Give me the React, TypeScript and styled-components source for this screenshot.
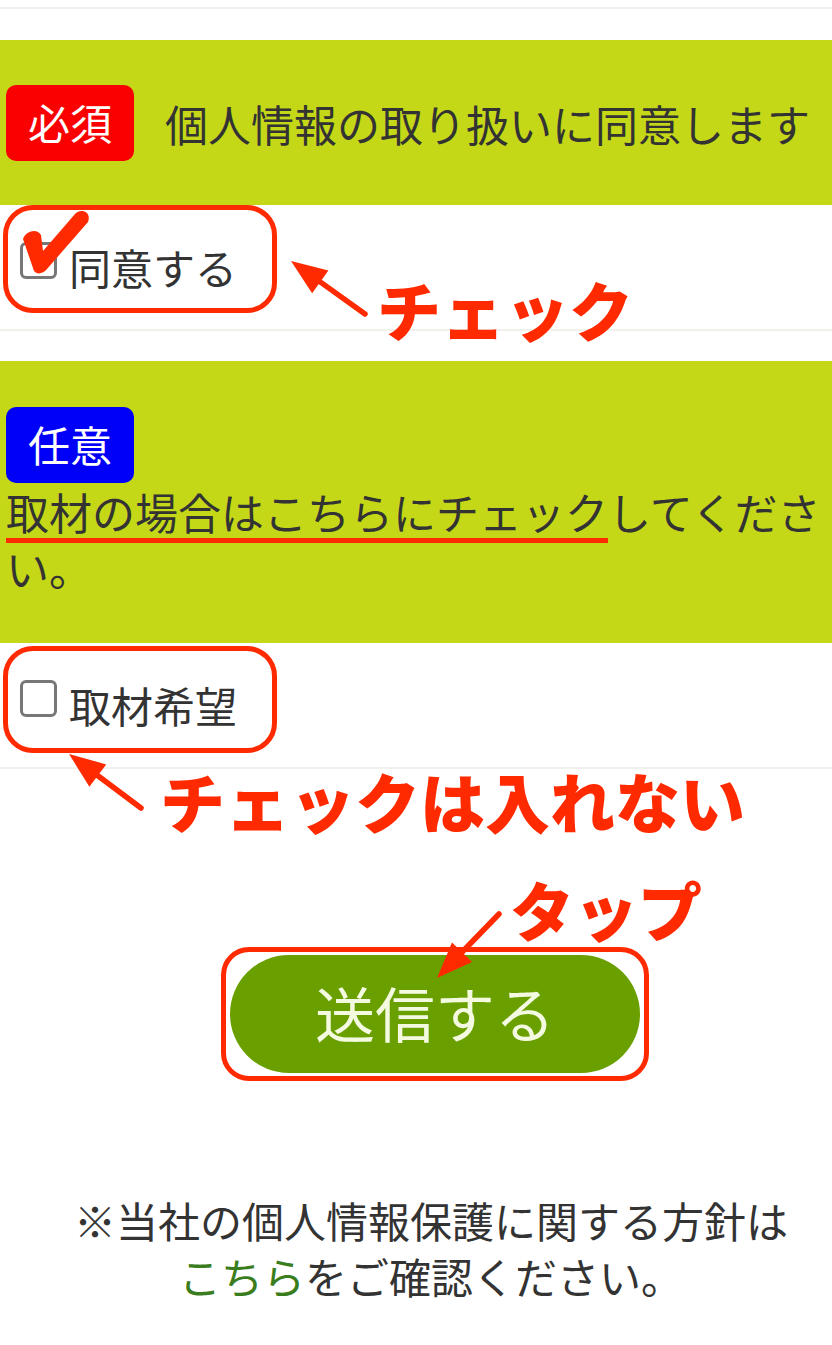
import React from "react";
import styled, { createGlobalStyle } from "styled-components";

const Global = createGlobalStyle`
  html, body { margin: 0; padding: 0; background: #ffffff; }
  body { font-family: "Noto Sans CJK JP", "Noto Sans", sans-serif; color: #333333; }
  * { box-sizing: border-box; }
`;

const RED = "#ff2a00";

const Page = styled.div`
  position: relative;
  width: 832px;
  min-height: 1345px;
  overflow: hidden;
  background: #ffffff;
`;

const TopRule = styled.div`
  margin-top: 7px;
  height: 2px;
  background: #f1f1ec;
  margin-bottom: 31px;
`;

const Group = styled.section`
  border-bottom: 2px solid #f1f1ec;
  margin-bottom: 30px;
`;

const Band = styled.div<{ $stack?: boolean }>`
  background: #c5d818;
  display: flex;
  flex-direction: ${(p) => (p.$stack ? "column" : "row")};
  align-items: ${(p) => (p.$stack ? "flex-start" : "center")};
  gap: ${(p) => (p.$stack ? "0" : "31px")};
  padding: ${(p) => (p.$stack ? "46px 6px 48px" : "0 6px")};
  height: ${(p) => (p.$stack ? "auto" : "165px")};
`;

const Badge = styled.span<{ $color: string }>`
  display: inline-flex;
  align-items: center;
  justify-content: center;
  width: 128px;
  height: 76px;
  border-radius: 10px;
  background: ${(p) => p.$color};
  color: #ffffff;
  font-size: 42px;
  line-height: 1;
  padding-bottom: 2px;
  flex-shrink: 0;
`;

const BandText = styled.p`
  margin: 0;
  font-size: 43px;
  line-height: 56px;
  color: #333333;
`;

const Marked = styled.span`
  text-decoration-line: underline;
  text-decoration-color: ${RED};
  text-decoration-thickness: 5px;
  text-underline-offset: 8px;
  text-decoration-skip-ink: none;
`;

const Row = styled.div`
  position: relative;
  height: 124px;
  display: flex;
  align-items: center;
  padding-left: 20px;
`;

const CheckLabel = styled.label`
  display: inline-flex;
  align-items: center;
  gap: 12px;
  font-size: 42px;
  line-height: 1;
  color: #333333;
`;

const Box = styled.input`
  appearance: none;
  -webkit-appearance: none;
  margin: 0 0 14px 0;
  width: 37px;
  height: 37px;
  border: 3px solid #777777;
  border-radius: 6px;
  background: #ffffff;
`;

const Frame = styled.div<{ $top: number; $height: number }>`
  position: absolute;
  left: 3px;
  top: ${(p) => p.$top}px;
  width: 274px;
  height: ${(p) => p.$height}px;
  border: 5px solid ${RED};
  border-radius: 30px;
  pointer-events: none;
`;

const SubmitArea = styled.div`
  display: flex;
  justify-content: center;
  padding: 148px 0 0 38px;
`;

const SubmitFrame = styled.div`
  padding: 3px 4px;
  border: 5px solid ${RED};
  border-radius: 28px;
`;

const SubmitButton = styled.button`
  display: flex;
  align-items: center;
  justify-content: center;
  width: 410px;
  height: 118px;
  border: none;
  border-radius: 60px;
  background: #6a9f00;
  color: #f3fae0;
  font-family: "Noto Sans CJK JP", "Noto Sans", sans-serif;
  font-size: 60px;
  line-height: 1;
  padding: 0 0 4px;
`;

const Note = styled.p`
  margin: 0;
  padding: 111px 0 0 30px;
  text-align: center;
  font-size: 42px;
  line-height: 56px;
  color: #333333;
`;

const NoteLink = styled.span`
  color: #3a7d1c;
`;

const Callout = styled.div<{ $x: number; $y: number; $size: number }>`
  position: absolute;
  left: ${(p) => p.$x}px;
  top: ${(p) => p.$y}px;
  font-size: ${(p) => p.$size}px;
  line-height: 1;
  font-weight: 900;
  color: ${RED};
  white-space: nowrap;
  pointer-events: none;
`;

const Overlay = styled.svg`
  position: absolute;
  left: 0;
  top: 0;
  width: 832px;
  height: 1345px;
  pointer-events: none;
`;

type ArrowProps = { tail: [number, number]; tip: [number, number] };

function Arrow({ tail, tip }: ArrowProps) {
  const dx = tip[0] - tail[0];
  const dy = tip[1] - tail[1];
  const len = Math.hypot(dx, dy);
  const ux = dx / len;
  const uy = dy / len;
  const headLen = 36;
  const half = 14;
  const bx = tip[0] - ux * headLen;
  const by = tip[1] - uy * headLen;
  const px = -uy * half;
  const py = ux * half;
  return (
    <g>
      <line
        x1={tail[0]}
        y1={tail[1]}
        x2={bx + ux * 4}
        y2={by + uy * 4}
        stroke={RED}
        strokeWidth={5.5}
        strokeLinecap="round"
      />
      <polygon
        points={`${tip[0]},${tip[1]} ${bx + px},${by + py} ${bx - px},${by - py}`}
        fill={RED}
      />
    </g>
  );
}

export default function App() {
  return (
    <>
      <Global />
      <Page>
        <TopRule />

        <Group>
          <Band>
            <Badge $color="#fa0000">必須</Badge>
            <BandText>個人情報の取り扱いに同意します</BandText>
          </Band>
          <Row>
            <CheckLabel>
              <Box type="checkbox" />
              同意する
            </CheckLabel>
            <Frame $top={0} $height={108} />
          </Row>
        </Group>

        <Group>
          <Band $stack>
            <Badge $color="#0000f8">任意</Badge>
            <BandText>
              <Marked>取材の場合はこちらにチェック</Marked>してください。
            </BandText>
          </Band>
          <Row>
            <CheckLabel>
              <Box type="checkbox" />
              取材希望
            </CheckLabel>
            <Frame $top={3} $height={107} />
          </Row>
        </Group>

        <SubmitArea>
          <SubmitFrame>
            <SubmitButton type="button">送信する</SubmitButton>
          </SubmitFrame>
        </SubmitArea>

        <Note>
          ※当社の個人情報保護に関する方針は
          <br />
          <NoteLink>こちら</NoteLink>をご確認ください。
        </Note>

        <Overlay viewBox="0 0 832 1345">
          <path
            d="M 23 239 C 26 231, 37 228, 41 235 L 43 251 L 75 214 C 80 208, 92 211, 88 222 L 47 269 C 42 275, 34 275, 33 268 Z"
            fill={RED}
          />
          <Arrow tail={[365, 314]} tip={[291, 261]} />
          <Arrow tail={[141, 808]} tip={[69, 754]} />
          <Arrow tail={[499, 914]} tip={[437, 978]} />
        </Overlay>

        <Callout $x={377} $y={276} $size={64}>
          チェック
        </Callout>
        <Callout $x={160} $y={768} $size={65}>
          チェックは入れない
        </Callout>
        <Callout $x={510} $y={876} $size={64}>
          タップ
        </Callout>
      </Page>
    </>
  );
}
